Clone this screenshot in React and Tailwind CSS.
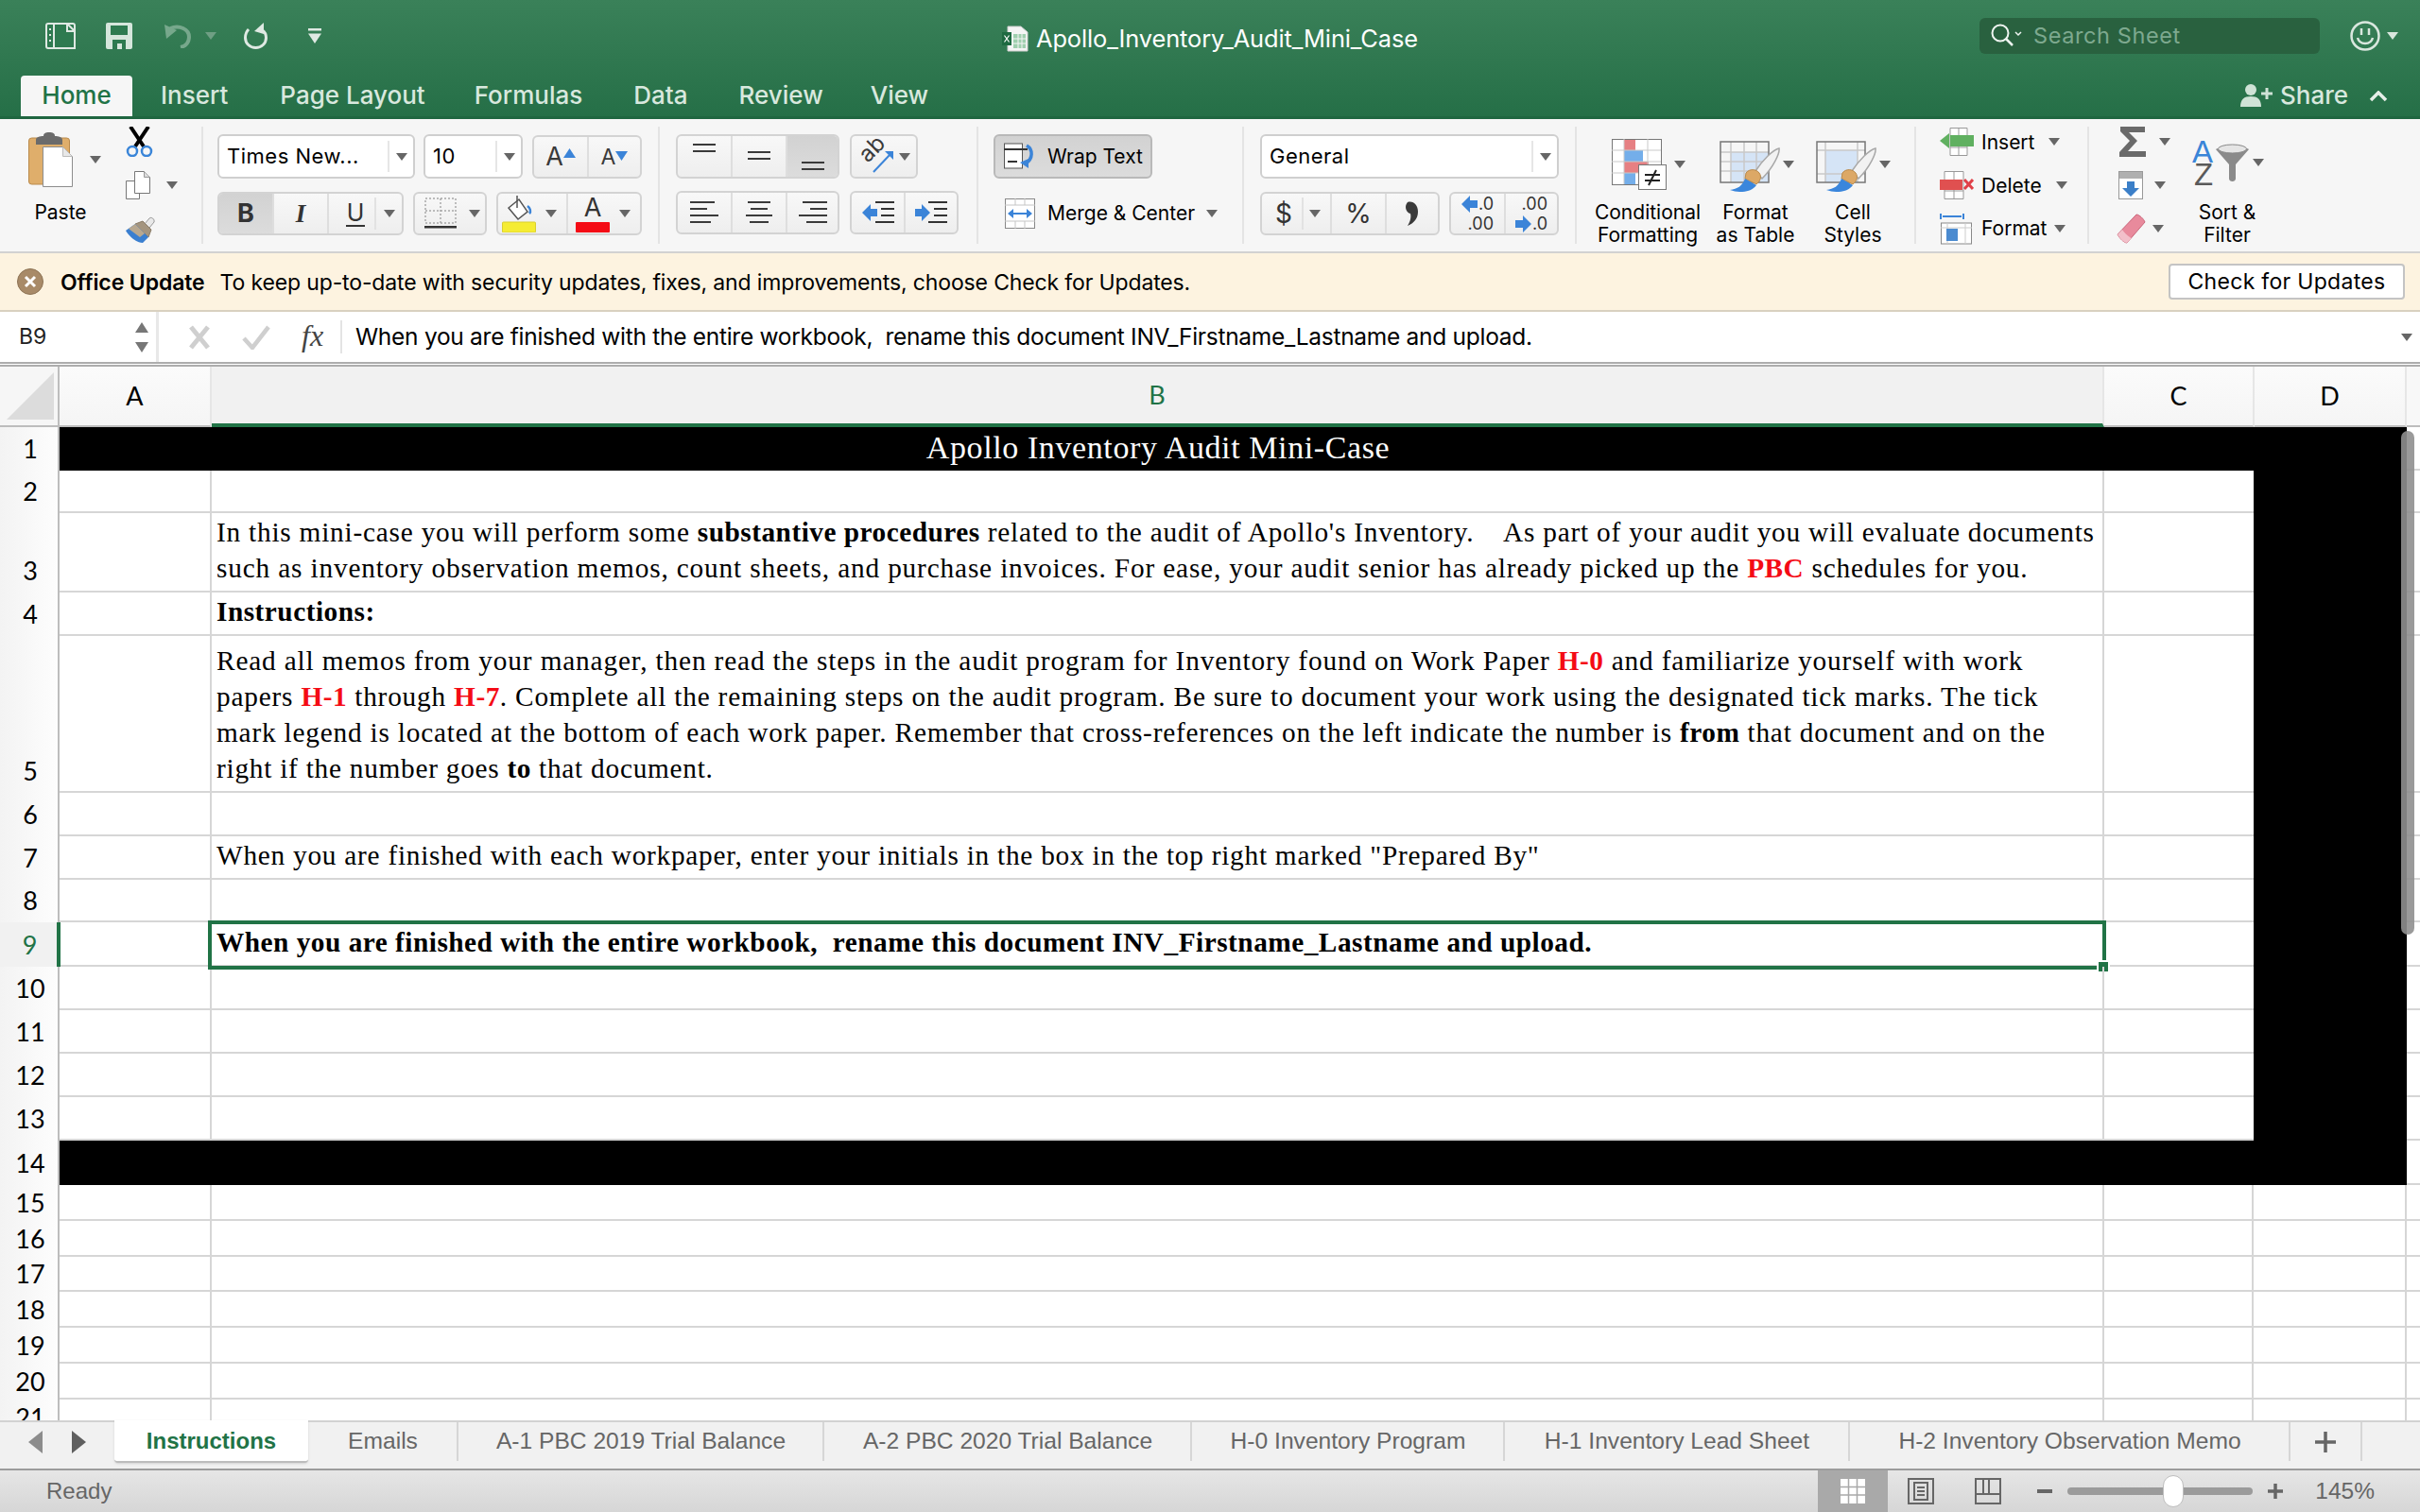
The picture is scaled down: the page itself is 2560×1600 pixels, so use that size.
import React from 'react';

const Caret = ({ c = '#666', className = '' }) => (
  <svg width="12" height="8" viewBox="0 0 12 8" className={`shrink-0 ${className}`}><path d="M0 0h12L6 8z" fill={c} /></svg>
);

const Sep = () => <div className="w-[2px] h-[124px] mt-[8px] bg-[#e4e4e4] shrink-0" />;

const Group = ({ className = '', children }) => (
  <div className={`flex h-[46px] rounded-[6px] border-2 border-[#d3d3d3] bg-gradient-to-b from-[#f8f8f8] to-[#eeeeee] overflow-hidden shrink-0 ${className}`}>{children}</div>
);

const Cell = ({ className = '', on, children }) => (
  <div className={`flex items-center justify-center border-r-2 border-[#dedede] last:border-r-0 ${on ? 'bg-gradient-to-b from-[#d2d2d2] to-[#dcdcdc]' : ''} ${className}`}>{children}</div>
);

const Lines = ({ ys }) => (
  <svg width="30" height="40" viewBox="0 0 30 40">
    {ys.map(([x1, x2, y], i) => <rect key={i} x={x1} y={y} width={x2 - x1} height="2" fill="#3a3a3a" />)}
  </svg>
);

const Combo = ({ w, label }) => (
  <div className={`${w} h-[47px] rounded-[6px] border-2 border-[#cfcfcf] bg-white flex items-center pl-[8px] text-[22px] tracking-[0.5px] text-black shrink-0`}>
    <span className="flex-1 truncate">{label}</span>
    <div className="w-[2px] h-[33px] bg-[#e6e6e6]" />
    <div className="w-[25px] flex justify-center"><Caret /></div>
  </div>
);

const RibbonLabel = ({ children }) => (
  <div className="text-[21px] leading-[24px] text-black text-center whitespace-pre">{children}</div>
);

const BrushTip = () => (
  <>
    <path d="M38 32C46 20 56 10 63 8c1 5-6 20-18 32z" fill="#f2f2f2" stroke="#a8a8a8" strokeWidth="1.5" />
    <path d="M28 34c4-5 11-4 14 0 3 4 1 9-3 12l-12-6z" fill="#dca866" stroke="#b98a4c" />
    <path d="M11 52c8-1 13-4 16-12l12 7c-5 7-16 9-28 5z" fill="#3a86dc" />
  </>
);

const GridLines = ({ rows, cols }) => (
  <>
    {rows.map(y => <line key={`r${y}`} x1="1" x2="52" y1={y} y2={y} stroke="#c9c9c9" strokeWidth="1.5" />)}
    {cols.map(x => <line key={`c${x}`} x1={x} x2={x} y1="1" y2="44" stroke="#c9c9c9" strokeWidth="1.5" />)}
    <rect x="1" y="1" width="51" height="43" fill="none" stroke="#777" strokeWidth="1.5" />
  </>
);

const TitleBar = () => (
  <div className="h-[126px] bg-gradient-to-b from-[#3a8159] to-[#256f47] border-b-[3px] border-[#1f6640] shrink-0 flex flex-col">
    <div className="h-[80px] flex items-start">
      <div className="w-[1060px] flex items-center pl-[48px] pt-[24px] shrink-0">
        <svg width="32" height="28" viewBox="0 0 32 28" fill="none"><rect x="1" y="1" width="30" height="26" rx="2" fill="#2e7a50" stroke="#dfe9e3" strokeWidth="2" /><path d="M9 1h14l8 8v18H9z" fill="#2e7a50" stroke="#dfe9e3" strokeWidth="2" /><path d="M23 1v8h8" stroke="#dfe9e3" strokeWidth="2" /><path d="M5 6v2M5 12v2M5 18v2" stroke="#dfe9e3" strokeWidth="2" /></svg>
        <svg width="28" height="28" viewBox="0 0 28 28" className="ml-[32px]"><path d="M2 0h24a2 2 0 0 1 2 2v24a2 2 0 0 1-2 2H2a2 2 0 0 1-2-2V2a2 2 0 0 1 2-2z" fill="#d6e6dc" /><rect x="5" y="3" width="18" height="10" fill="#2e7a50" /><path d="M7 28v-10h14v10h-4v-6h-5v6z" fill="#2e7a50" /></svg>
        <svg width="31" height="26" viewBox="0 0 31 26" fill="none" className="ml-[32px]"><path d="M8 5C18 1 28 6 28 14c0 6-4 10-9 11" stroke="#77a88c" strokeWidth="4" /><path d="M2 1l2 15 11-9z" fill="#77a88c" /></svg>
        <Caret c="#6f9f84" className="ml-[14px]" />
        <svg width="26" height="28" viewBox="0 0 26 28" fill="none" className="ml-[29px]"><path d="M5 7C2 10 1.500 13 1.500 16c0 6 5 10.500 11 10.500s11-4.500 11-10.500c0-3-1-6-4-8" stroke="#dfe9e3" strokeWidth="3" /><path d="M21 0v12L11 9z" fill="#dfe9e3" /></svg>
        <svg width="16" height="16" viewBox="0 0 16 16" className="ml-[41px]"><rect x="1" y="0" width="14" height="2.5" fill="#dfe9e3" /><path d="M1 5.500h14L8 16z" fill="#dfe9e3" /></svg>
      </div>
      <div className="w-[1034px] flex items-center pt-[22px] shrink-0">
        <svg width="28" height="28" viewBox="0 0 28 28">
          <path d="M6 1h14l7 6v20H6z" fill="#f5f5f5" stroke="#cfcfcf" /><path d="M12 9h13v15H12z" fill="#9fcfae" /><path d="M12 14h13M12 19h13M17 9v15M21 9v15" stroke="#f5f5f5" /><rect x="0" y="7" width="10" height="14" fill="#1e6a41" /><path d="M2.500 10.500l5 7M7.500 10.500l-5 7" stroke="#fff" strokeWidth="1.200" />
        </svg>
        <span className="ml-[8px] text-[25.400px] text-white tracking-[-0.1px] whitespace-pre">Apollo_Inventory_Audit_Mini_Case</span>
      </div>
      <div className="w-[360px] h-[38px] mt-[19px] rounded-[6px] bg-[#29613f] flex items-center pl-[11px] shrink-0">
        <svg width="34" height="28" viewBox="0 0 34 28" fill="none"><circle cx="11" cy="11" r="8.500" stroke="#eef4f0" strokeWidth="2" /><path d="M17 17l7 7" stroke="#eef4f0" strokeWidth="2.500" /><path d="M27 10l3 3 3-3" stroke="#eef4f0" strokeWidth="1.500" /></svg>
        <span className="ml-[12px] text-[23.500px] tracking-[0.6px] text-[#7ea98f]">Search Sheet</span>
      </div>
      <div className="flex items-center ml-[32px] mt-[22px]">
        <svg width="32" height="32" viewBox="0 0 32 32" fill="none"><circle cx="16" cy="16" r="14.500" stroke="#d9e7de" strokeWidth="2.500" /><path d="M12 8v7M20 8v7" stroke="#d9e7de" strokeWidth="2.500" /><path d="M8 18c2 8 14 8 16 0" stroke="#d9e7de" strokeWidth="2.500" /></svg>
        <Caret c="#d9e7de" className="ml-[7px]" />
      </div>
    </div>
    <div className="flex-1 flex items-end pl-[22px] text-[26px] font-medium text-[#d8e8de] whitespace-pre">
      <div className="w-[118px] h-[43px] bg-[#f6f6f6] rounded-t-[4px] text-[#217346] flex items-center justify-center pb-[2px]">Home</div>
      {[['Insert', 'ml-[30px]'], ['Page Layout', 'ml-[55px]'], ['Formulas', 'ml-[52px]'], ['Data', 'ml-[54px]'], ['Review', 'ml-[54px]'], ['View', 'ml-[50px]']].map(([t, m]) => (
        <div key={t} className={`${m} h-[43px] flex items-center pb-[2px]`}>{t}</div>
      ))}
      <div className="flex-1" />
      <svg width="34" height="24" viewBox="0 0 34 24" className="mb-[10px]"><circle cx="11" cy="6" r="6" fill="#cfe2d6" /><path d="M0 24c0-8 4-11 11-11s11 3 11 11z" fill="#cfe2d6" /><path d="M22 10h12M28 4v12" stroke="#cfe2d6" strokeWidth="3" /></svg>
      <div className="ml-[8px] h-[43px] flex items-center pb-[2px]">Share</div>
      <svg width="20" height="12" viewBox="0 0 20 12" fill="none" className="ml-[22px] mr-[34px] mb-[15px]"><path d="M2 10l8-8 8 8" stroke="#e6efe9" strokeWidth="3.500" /></svg>
    </div>
  </div>
);

const Ribbon = () => (
  <div className="h-[142px] bg-[#f6f6f6] border-b-2 border-[#d2d2d2] flex items-start shrink-0">
    {/* clipboard */}
    <div className="w-[213px] flex shrink-0">
      <div className="ml-[30px] w-[85px] pt-[14px]">
        <div className="flex items-center">
          <svg width="47" height="58" viewBox="0 0 47 58"><rect x="0.500" y="6" width="43" height="49" rx="3" fill="#dfae6b" stroke="#b98a4c" /><path d="M8 8c0-3 4-4 8-4 0-3 2-4 6-4s6 1 6 4c4 0 8 1 8 4v5H8z" fill="#6b6b6b" /><path d="M15.500 15.500h21l10 10v32h-31z" fill="#fff" stroke="#8d8d8d" /><path d="M36.500 15.500v10h10" fill="#e8e8e8" stroke="#bbb" /></svg>
          <Caret className="ml-[18px]" />
        </div>
        <div className="w-[68px] mt-[15px]"><RibbonLabel>Paste</RibbonLabel></div>
      </div>
      <div className="ml-[18px] pt-[8px] flex flex-col">
        <svg width="29" height="32" viewBox="0 0 29 32" fill="none"><path d="M5 0l14 21M24 0L10 21" stroke="#000" strokeWidth="4" /><circle cx="7" cy="26" r="5" stroke="#3a85d8" strokeWidth="2.500" /><circle cx="22" cy="26" r="5" stroke="#3a85d8" strokeWidth="2.500" /></svg>
        <div className="flex items-center mt-[15px]">
          <svg width="26" height="30" viewBox="0 0 26 30"><path d="M0.500 10.500h14v19h-14z" fill="#fff" stroke="#777" /><path d="M9.500 0.500h10l6 6v17h-16z" fill="#fff" stroke="#777" /><path d="M19.500 0.500v6h6" fill="#ddd" stroke="#999" /></svg>
          <Caret className="ml-[17px]" />
        </div>
        <svg width="32" height="28" viewBox="0 0 32 28" className="mt-[18px]"><path d="M20 8l5-6c2-2 6 1 5 4l-5 6z" fill="#e9e9e9" stroke="#999" /><path d="M10 8l8-3 9 9-3 8z" fill="#a4957f" stroke="#8a7c68" /><path d="M0 15l10-7 14 14-6 6c-6 0-14-6-18-13z" fill="#3a7fd0" /><path d="M3 13l7-5 10 10-5 4z" fill="#b8a890" /></svg>
      </div>
    </div>
    <Sep />
    {/* font */}
    <div className="w-[481px] pl-[15px] pt-[16px] shrink-0">
      <div className="flex">
        <Combo w="w-[209px]" label="Times New..." />
        <Combo w="w-[105px] ml-[9px]" label="10" />
        <Group className="w-[116px] ml-[10px] mt-px">
          <Cell className="w-[58px]"><span className="text-[27px] text-[#3a3a3a]">A</span><svg width="13" height="10" viewBox="0 0 13 10" className="mb-[8px]"><path d="M0 10L6.500 0 13 10z" fill="#3b84d8" /></svg></Cell>
          <Cell className="flex-1"><span className="text-[23px] text-[#3a3a3a]">A</span><svg width="13" height="10" viewBox="0 0 13 10" className="mb-[2px]"><path d="M0 0h13L6.500 10z" fill="#3b84d8" /></svg></Cell>
        </Group>
      </div>
      <div className="flex mt-[14px]">
        <Group className="w-[197px]">
          <Cell on className="w-[58px]"><span className="text-[27px] font-bold text-[#333]">B</span></Cell>
          <Cell className="w-[58px]"><span className="text-[27px] italic font-bold text-[#333] font-['Liberation_Serif',serif]">I</span></Cell>
          <Cell className="flex-1 justify-start pl-[18px]">
            <div className="flex flex-col items-center"><span className="text-[25px] leading-[25px] text-[#333]">U</span><div className="w-[20px] h-[2px] bg-[#333]" /></div>
            <div className="w-[2px] h-[34px] bg-[#e2e2e2] ml-[10px]" />
            <Caret className="ml-[8px]" />
          </Cell>
        </Group>
        <Group className="w-[78px] ml-[10px]">
          <div className="flex items-center pl-[10px]">
            <svg width="34" height="34" viewBox="0 0 34 34" fill="none"><path d="M1 1h32v26H1zM17 1v26M1 14h32" stroke="#a8a8a8" strokeWidth="1.500" strokeDasharray="2 2" /><rect x="0" y="30" width="34" height="2.500" fill="#333" /></svg>
            <Caret className="ml-[13px]" />
          </div>
        </Group>
        <Group className="w-[154px] ml-[10px]">
          <Cell className="w-[74px] pr-[6px]">
            <svg width="36" height="40" viewBox="0 0 36 40" fill="none"><path d="M7 14l11-9 9 13-10 8z" fill="#fff" stroke="#555" strokeWidth="1.500" /><path d="M16 1v13" stroke="#555" strokeWidth="1.500" /><path d="M27 12c3 2 4 6 2 8" stroke="#3b84d8" strokeWidth="2.500" /><rect x="0.500" y="29" width="35" height="11" rx="1" fill="#f5ec33" stroke="#d9cf30" /></svg>
            <Caret className="ml-[10px]" />
          </Cell>
          <Cell className="flex-1 pr-[2px]">
            <div className="flex flex-col items-center"><span className="text-[27px] leading-[27px] text-[#333]">A</span><div className="w-[36px] h-[11px] bg-[#f40b15] rounded-[1px] mt-[2px]" /></div>
            <Caret className="ml-[10px]" />
          </Cell>
        </Group>
      </div>
    </div>
    <Sep />
    {/* alignment */}
    <div className="w-[335px] pl-[17px] pt-[16px] shrink-0">
      <div className="flex">
        <Group className="w-[173px] h-[47px]">
          <Cell className="w-[58px]"><Lines ys={[[3, 27, 6], [3, 27, 13]]} /></Cell>
          <Cell className="w-[58px]"><Lines ys={[[3, 27, 14], [3, 27, 21]]} /></Cell>
          <Cell on className="flex-1"><Lines ys={[[3, 27, 25], [3, 27, 32]]} /></Cell>
        </Group>
        <Group className="w-[72px] h-[47px] ml-[11px]">
          <div className="flex items-center pl-[10px]">
            <svg width="36" height="34" viewBox="0 0 36 34" className="overflow-visible"><text transform="translate(7 24) rotate(-45)" fontSize="24" fill="#3a3a3a" fontFamily="Inter">ab</text><path d="M13 33L31 14" stroke="#3b84d8" strokeWidth="2" /><path d="M25 11h9v9z" fill="#3b84d8" /></svg>
            <Caret className="ml-[4px]" />
          </div>
        </Group>
      </div>
      <div className="flex mt-[13px]">
        <Group className="w-[173px]">
          <Cell className="w-[58px]"><Lines ys={[[0, 26, 8], [0, 18, 15], [0, 30, 22], [0, 22, 29]]} /></Cell>
          <Cell className="w-[58px]"><Lines ys={[[3, 27, 8], [6, 24, 15], [1, 29, 22], [5, 25, 29]]} /></Cell>
          <Cell className="flex-1"><Lines ys={[[4, 30, 8], [12, 30, 15], [0, 30, 22], [8, 30, 29]]} /></Cell>
        </Group>
        <Group className="w-[115px] ml-[11px]">
          <Cell className="w-[57px]"><svg width="34" height="24" viewBox="0 0 34 24"><path d="M0 12l9-9v5h7v8H9v5z" fill="#3b84d8" /><path d="M14 1h20M20 8h14M20 15h14M14 22h20" stroke="#333" strokeWidth="2" /></svg></Cell>
          <Cell className="flex-1"><svg width="34" height="24" viewBox="0 0 34 24"><path d="M16 12l-9-9v5H0v8h7v5z" fill="#3b84d8" /><path d="M14 1h20M20 8h14M20 15h14M14 22h20" stroke="#333" strokeWidth="2" /></svg></Cell>
        </Group>
      </div>
    </div>
    <Sep />
    {/* wrap and merge */}
    <div className="w-[279px] pl-[16px] pt-[16px] shrink-0">
      <div className="w-[168px] h-[47px] rounded-[6px] border-2 border-[#b9b9b9] bg-gradient-to-b from-[#d2d2d2] to-[#dcdcdc] flex items-center pl-[9px] text-[21px] text-black">
        <svg width="36" height="30" viewBox="0 0 36 30" fill="none"><rect x="0.500" y="1" width="19" height="26" fill="#fff" stroke="#555" /><path d="M0 7h25M4 20h10" stroke="#333" strokeWidth="2" /><path d="M24 3c7 4 7 14-1 19" stroke="#3b84d8" strokeWidth="3.500" /><path d="M17 21l9-4v10z" fill="#3b84d8" /></svg>
        <span className="ml-[10px] pt-px">Wrap Text</span>
      </div>
      <div className="flex items-center mt-[21px] ml-[12px] text-[21px] text-black">
        <svg width="32" height="32" viewBox="0 0 32 32" fill="none"><rect x="0.500" y="0.500" width="31" height="31" fill="#fff" stroke="#888" /><path d="M0 7h32M0 24h32M11 0v7M21 0v7M11 24v8M21 24v8" stroke="#c5c5c5" /><path d="M6 16h20" stroke="#3b84d8" strokeWidth="2" /><path d="M3 16l6-5v10zM29 16l-6-5v10z" fill="#3b84d8" /></svg>
        <span className="ml-[13px] whitespace-pre">Merge &amp; Center</span>
        <Caret className="ml-[12px]" />
      </div>
    </div>
    <Sep />
    {/* number */}
    <div className="w-[350px] pl-[17px] pt-[16px] shrink-0">
      <Combo w="w-[316px]" label="General" />
      <div className="flex mt-[14px]">
        <Group className="w-[190px]">
          <Cell className="w-[74px] justify-start pl-[14px]">
            <span className="text-[28px] text-[#333]">$</span>
            <div className="w-[2px] h-[34px] bg-[#e2e2e2] ml-[10px]" />
            <Caret className="ml-[6px]" />
          </Cell>
          <Cell className="w-[58px]"><span className="text-[28px] text-[#333]">%</span></Cell>
          <Cell className="flex-1"><svg width="14" height="26" viewBox="0 0 14 26"><path d="M2 1c6-2 11 3 11 10 0 7-4 12-11 15 3-5 4-9 3-13C3 13 0 10 0 6c0-2 1-4 2-5z" fill="#3a3a3a" /></svg></Cell>
        </Group>
        <Group className="w-[116px] ml-[10px]">
          <Cell className="w-[58px] text-[18px] leading-[21px] text-[#333]">
            <div className="flex flex-col items-end"><div className="flex items-center"><svg width="17" height="18" viewBox="0 0 17 18" className="mr-[1px]"><path d="M0 9l9-9v5h8v8H9v5z" fill="#3b84d8" /></svg>.0</div><div>.00</div></div>
          </Cell>
          <Cell className="flex-1 text-[18px] leading-[21px] text-[#333]">
            <div className="flex flex-col items-end"><div>.00</div><div className="flex items-center"><svg width="17" height="18" viewBox="0 0 17 18" className="mr-[1px]"><path d="M17 9L8 0v5H0v8h8v5z" fill="#3b84d8" /></svg>.0</div></div>
          </Cell>
        </Group>
      </div>
    </div>
    <Sep />
    {/* styles */}
    <div className="w-[357px] pl-[12px] pt-[18px] flex shrink-0">
      <div className="w-[126px] flex flex-col items-center">
        <div className="h-[56px] w-full flex items-start pl-[25px] pt-[3px]">
          <svg width="58" height="54" viewBox="0 0 58 54">
            <rect x="0.500" y="0.500" width="52" height="48" fill="#fff" stroke="#777" />
            <rect x="13" y="1" width="12" height="11" fill="#e68083" /><rect x="13" y="12" width="20" height="12" fill="#74aeea" /><rect x="13" y="24" width="26" height="12" fill="#e68083" /><rect x="13" y="36" width="12" height="12" fill="#74aeea" />
            <path d="M0 12h52M0 24h52M0 36h52M13 0v48M38 0v48" stroke="#c9c9c9" />
            <rect x="28.500" y="27.500" width="29" height="26" fill="#fff" stroke="#777" />
            <path d="M35 38h16M35 44h16M47 33l-8 16" stroke="#222" strokeWidth="2" />
          </svg>
          <Caret className="mt-[23px] ml-[8px]" />
        </div>
        <div className="mt-[13px]"><RibbonLabel>{'Conditional\nFormatting'}</RibbonLabel></div>
      </div>
      <div className="w-[102px] flex flex-col items-center">
        <div className="h-[56px] w-full flex items-start pl-[13px] pt-[5px]">
          <svg width="64" height="54" viewBox="0 0 64 54" fill="none">
            <rect x="12" y="12" width="40" height="32" fill="#d5e4f6" />
            <GridLines rows={[12, 22, 32]} cols={[12, 26, 39]} />
            <BrushTip />
          </svg>
          <Caret className="mt-[21px] ml-[3px]" />
        </div>
        <div className="mt-[13px]"><RibbonLabel>{'Format\nas Table'}</RibbonLabel></div>
      </div>
      <div className="w-[104px] flex flex-col items-center">
        <div className="h-[56px] w-full flex items-start pl-[13px] pt-[5px]">
          <svg width="64" height="54" viewBox="0 0 64 54" fill="none">
            <rect x="10" y="10" width="34" height="34" fill="#d5e4f6" />
            <GridLines rows={[10, 35]} cols={[10, 44]} />
            <BrushTip />
          </svg>
          <Caret className="mt-[21px] ml-[3px]" />
        </div>
        <div className="mt-[13px]"><RibbonLabel>{'Cell\nStyles'}</RibbonLabel></div>
      </div>
    </div>
    <Sep />
    {/* cells */}
    <div className="w-[181px] pl-[25px] pt-px shrink-0 text-[21px] text-black">
      <div className="h-[46px] flex items-center">
        <svg width="36" height="30" viewBox="0 0 36 30"><path d="M11 0.500h18v29H11zM20 0v30M11 21h18" fill="#fff" stroke="#999" /><rect x="11" y="8" width="25" height="12" fill="#60b060" /><path d="M0 14l10-8v16z" fill="#60b060" /></svg>
        <span className="ml-[8px] pt-[2px]">Insert</span><Caret className="ml-[15px]" />
      </div>
      <div className="h-[46px] flex items-center">
        <svg width="36" height="30" viewBox="0 0 36 30"><path d="M5 0.500h20v29H5zM15 0v30M5 21h20" fill="#fff" stroke="#999" /><rect x="0" y="9" width="24" height="11" fill="#e05050" /><path d="M26 9l9 10M35 9l-9 10" stroke="#e04048" strokeWidth="3" /></svg>
        <span className="ml-[8px] pt-[2px]">Delete</span><Caret className="ml-[15px]" />
      </div>
      <div className="h-[46px] flex items-center">
        <svg width="36" height="34" viewBox="0 0 36 34"><path d="M1 1v6M25 1v6M3 4h20" stroke="#3b84d8" strokeWidth="2" /><rect x="1.500" y="11" width="32" height="22" fill="#fff" stroke="#888" /><path d="M1 16h33M8 11v22M27 11v22" stroke="#ccc" /><rect x="7" y="17" width="12" height="13" fill="#4b8bd0" /></svg>
        <span className="ml-[8px]">Format</span><Caret className="ml-[8px]" />
      </div>
    </div>
    <Sep />
    {/* editing */}
    <div className="flex-1 pl-[28px] flex">
      <div className="w-[78px] pt-px">
        <div className="h-[46px] flex items-center">
          <svg width="30" height="32" viewBox="0 0 30 32" className="ml-[4px]"><path d="M1 0h26v6H10l9 9-10 11h19v6H0v-5l11-12L1 5z" fill="#6a6a6a" /></svg>
          <Caret className="ml-[12px]" />
        </div>
        <div className="h-[46px] flex items-center">
          <svg width="27" height="30" viewBox="0 0 27 30" className="ml-[3px]"><rect x="0.500" y="0.500" width="25" height="29" fill="#fff" stroke="#999" /><rect x="1" y="1" width="24" height="7" fill="#b0b0b0" /><path d="M9 11h8v7h5l-9 9-9-9h5z" fill="#3b7fc8" /></svg>
          <Caret className="ml-[11px]" />
        </div>
        <div className="h-[46px] flex items-center">
          <svg width="32" height="32" viewBox="0 0 32 32"><path d="M2 22L22 1c3 0 8 5 9 8L12 31c-3 0-8-5-10-9z" fill="#e88a9c" stroke="#c9657a" /><path d="M2 22c2 4 7 9 10 9l5-5c-3-1-8-6-10-9z" fill="#f2c0ca" /></svg>
          <Caret className="ml-[7px]" />
        </div>
      </div>
      <div className="w-[80px] pt-[18px] flex flex-col items-center">
        <div className="h-[56px] w-full flex items-start pl-[3px] pt-[3px]">
          <svg width="61" height="52" viewBox="0 0 61 52" className="overflow-visible">
            <text x="0" y="25" fontSize="33" fill="#3a85d8" fontFamily="Liberation Sans">A</text>
            <text x="2" y="49" fontSize="33" fill="#5a5a5a" fontFamily="Liberation Sans">Z</text>
            <path d="M25 11c3-3 32-3 35 0L46 27v15c0 4-7 4-7 0V27z" fill="#8a8a8a" /><ellipse cx="42.500" cy="10.500" rx="15" ry="4.500" fill="#e5e5e5" stroke="#888" />
          </svg>
          <Caret className="mt-[21px] ml-[3px]" />
        </div>
        <div className="mt-[13px]"><RibbonLabel>{'Sort &\nFilter'}</RibbonLabel></div>
      </div>
    </div>
  </div>
);

const UpdateBar = () => (
  <div className="h-[62px] bg-[#fdf3e0] border-b-2 border-[#d9d1c0] flex items-center shrink-0 text-[23px] text-black whitespace-pre">
    <svg width="28" height="28" viewBox="0 0 28 28" className="ml-[18px]"><circle cx="14" cy="14" r="13.500" fill="#a88a68" stroke="#8d7355" /><path d="M9 9l10 10M19 9L9 19" stroke="#fff" strokeWidth="3" /></svg>
    <span className="ml-[18px] font-semibold tracking-[-0.1px] pt-[2px]">Office Update</span>
    <span className="ml-[16px] tracking-[-0.14px] pt-[2px]">To keep up-to-date with security updates, fixes, and improvements, choose Check for Updates.</span>
    <div className="flex-1" />
    <div className="w-[250px] h-[38px] mr-[16px] rounded-[4px] border-2 border-[#c4c4c4] bg-white flex items-center justify-center text-[23px] tracking-[0.3px]">Check for Updates</div>
  </div>
);

const FormulaBar = () => (
  <div className="h-[58px] bg-white border-b-[5px] border-double border-[#adadad] flex items-center shrink-0">
    <div className="w-[168px] h-full border-r-[3px] border-[#e8e8e8] flex items-center pl-[20px] pr-[8px] text-[23px] text-[#222] mr-[31px]">
      <span className="flex-1">B9</span>
      <svg width="14" height="32" viewBox="0 0 14 32"><path d="M0 11L7 0l7 11zM0 21h14L7 32z" fill="#777" /></svg>
    </div>
    <svg width="24" height="26" viewBox="0 0 24 26" fill="none"><path d="M3 2l18 22M21 2L3 24" stroke="#cfcfcf" strokeWidth="5" /></svg>
    <svg width="30" height="26" viewBox="0 0 30 26" fill="none" className="ml-[33px]"><path d="M2 14l9 10L28 2" stroke="#cfcfcf" strokeWidth="4.500" /></svg>
    <span className="ml-[33px] w-[43px] text-[32px] leading-none italic text-[#444] font-['Liberation_Serif',serif] border-r-2 border-[#e4e4e4] pb-[3px]">fx</span>
    <span className="ml-[14px] text-[24.500px] tracking-[-0.28px] text-black whitespace-pre">When you are finished with the entire workbook,  rename this document INV_Firstname_Lastname and upload.</span>
    <div className="flex-1" />
    <Caret c="#666" className="mr-[8px]" />
  </div>
);

const ColHead = ({ w, label, on }) => (
  <div className={`${w} border-r-2 border-[#e6e6e6] flex items-center justify-center ${on ? 'bg-[#f1f1f1] border-b-4 border-b-[#217346] text-[#217346]' : 'border-b-2 border-b-[#bdbdbd] bg-gradient-to-b from-[#fbfbfb] to-[#f5f5f5] text-black'}`}>{label}</div>
);

const ColHeader = () => (
  <div className="h-[64px] flex font-['Lato',sans-serif] text-[27px] shrink-0">
    <div className="w-[63px] border-r-2 border-b-2 border-[#bdbdbd] bg-[#f6f6f6] flex items-center justify-center pl-[2px]">
      <svg width="50" height="50" viewBox="0 0 50 50"><path d="M50 0v50H0z" fill="#dcdcdc" /></svg>
    </div>
    <ColHead w="w-[161px]" label="A" />
    <ColHead w="w-[2002px]" label="B" on />
    <ColHead w="w-[159px]" label="C" />
    <ColHead w="w-[161px]" label="D" />
    <div className="flex-1 bg-[#f8f8f8] border-b-2 border-[#bdbdbd]" />
  </div>
);

const Row = ({ n, h, children, d = false, on, full }) => {
  const line = full ? '' : 'border-b-2 border-[#d6d6d6]';
  return (
    <div className={`${h} flex shrink-0`}>
      <div className={`flex items-end justify-center leading-[38px] font-['Lato',sans-serif] text-[27px] shrink-0 ${d || full ? 'pb-[4px]' : ''} ${on ? 'w-[64px] pl-[3px] bg-[#f1f1f1] text-[#217346] border-r-4 border-[#217346]' : 'w-[63px] pl-[3px] bg-gradient-to-r from-[#f3f3f3] to-[#fdfdfd] text-black border-r-2 border-[#bdbdbd]'}`}>{n}</div>
      {full ? (
        <div className="w-[2483px] bg-black flex">
          <div className="w-[161px] shrink-0" />
          <div className="w-[2002px] shrink-0 flex items-center justify-center pb-[3px] text-white text-[34px] tracking-[0.6px] font-['Liberation_Serif',serif]">{children}</div>
        </div>
      ) : (
        <>
          <div className={`${on ? 'w-[160px]' : 'w-[161px]'} border-r-2 border-[#d6d6d6] ${line} shrink-0`} />
          <div className={`w-[2002px] border-r-2 border-[#d6d6d6] ${line} shrink-0 relative flex flex-col justify-end pl-[5px] pb-[5px] text-[29.300px] leading-[38px] tracking-[0.75px] text-black font-['Liberation_Serif',serif] whitespace-pre [&_b]:tracking-[0.5px]`}>{children}</div>
          <div className={`w-[158px] ${d ? '' : 'border-r-2 border-[#d6d6d6]'} ${line} shrink-0`} />
          <div className={`w-[162px] shrink-0 ${d ? 'bg-black' : `border-r-2 border-[#d6d6d6] ${line}`}`} />
        </>
      )}
      <div className="flex-1 border-b-2 border-[#d6d6d6]" />
    </div>
  );
};

const Red = ({ children }) => <b className="text-[#f40b15]">{children}</b>;

const Sheet = () => (
  <div className="flex-1 overflow-hidden relative">
    <Row n="1" h="h-[46px]" full>Apollo Inventory Audit Mini-Case</Row>
    <Row n="2" h="h-[45px]" d />
    <Row n="3" h="h-[84px]" d>
      <div className="tracking-[0.78px]">In this mini-case you will perform some <b>substantive procedures</b> related to the audit of Apollo's Inventory.    As part of your audit you will evaluate documents</div>
      <div className="tracking-[0.84px]">such as inventory observation memos, count sheets, and purchase invoices. For ease, your audit senior has already picked up the <Red>PBC</Red> schedules for you.</div>
    </Row>
    <Row n="4" h="h-[46px]" d><b>Instructions:</b></Row>
    <Row n="5" h="h-[166px]" d>
      <div className="tracking-[0.85px]">Read all memos from your manager, then read the steps in the audit program for Inventory found on Work Paper <Red>H-0</Red> and familiarize yourself with work</div>
      <div className="tracking-[0.8px]">papers <Red>H-1</Red> through <Red>H-7</Red>. Complete all the remaining steps on the audit program. Be sure to document your work using the designated tick marks. The tick</div>
      <div className="tracking-[0.8px]">mark legend is located at the bottom of each work paper. Remember that cross-references on the left indicate the number is <b>from</b> that document and on the</div>
      <div>right if the number goes <b>to</b> that document.</div>
    </Row>
    <Row n="6" h="h-[46px]" d />
    <Row n="7" h="h-[46px]" d>When you are finished with each workpaper, enter your initials in the box in the top right marked "Prepared By"</Row>
    <Row n="8" h="h-[45px]" d />
    <Row n="9" h="h-[47px]" d on>
      <b>When you are finished with the entire workbook,  rename this document INV_Firstname_Lastname and upload.</b>
      <div className="absolute -left-[4px] -top-[2px] -right-[4px] -bottom-[5px] border-4 border-[#217346]" />
      <div className="absolute -right-[6px] -bottom-[7px] w-[10px] h-[10px] bg-[#217346] outline-2 outline-white" />
    </Row>
    <Row n="10" h="h-[46px]" d />
    <Row n="11" h="h-[46px]" d />
    <Row n="12" h="h-[46px]" d />
    <Row n="13" h="h-[46px]" d />
    <Row n="14" h="h-[47px]" full />
    <Row n="15" h="h-[38px]" />
    <Row n="16" h="h-[38px]" />
    <Row n="17" h="h-[37px]" />
    <Row n="18" h="h-[38px]" />
    <Row n="19" h="h-[38px]" />
    <Row n="20" h="h-[38px]" />
    <Row n="21" h="h-[38px]" />
    <div className="absolute left-[2540px] top-[4px] w-[14px] h-[533px] rounded-full bg-[#8f8f8f]/90" />
  </div>
);

const tabs = [
  ['Emails', 'w-[159px]'],
  ['A-1 PBC 2019 Trial Balance', 'w-[387px]'],
  ['A-2 PBC 2020 Trial Balance', 'w-[389px]'],
  ['H-0 Inventory Program', 'w-[331px]'],
  ['H-1 Inventory Lead Sheet', 'w-[365px]'],
  ['H-2 Inventory Observation Memo', 'w-[466px]'],
];

const TabBar = () => (
  <div className="h-[51px] bg-[#f1f1f1] border-t-2 border-[#d2d2d2] flex items-start shrink-0 text-[24.600px] text-[#666] whitespace-pre font-['Liberation_Sans',Arial,sans-serif]">
    <div className="w-[121px] h-[42px] flex items-center pl-[30px] shrink-0">
      <svg width="15" height="24" viewBox="0 0 15 24"><path d="M15 0v24L0 12z" fill="#8c8c8c" /></svg>
      <svg width="15" height="24" viewBox="0 0 15 24" className="ml-[31px]"><path d="M0 0v24l15-12z" fill="#5f5f5f" /></svg>
    </div>
    <div className="w-[205px] h-[45px] -mt-[2px] bg-white rounded-b-[4px] border-b-2 border-[#bdbdbd] shadow-sm flex items-center justify-center text-[24px] text-[#217346] font-bold shrink-0">Instructions</div>
    {tabs.map(([t, w]) => (
      <div key={t} className={`${w} h-[41px] border-r-2 border-[#d6d6d6] flex items-center justify-center shrink-0 pl-px`}>{t}</div>
    ))}
    <div className="w-[76px] h-[41px] border-r-2 border-[#d6d6d6] flex items-center justify-center shrink-0">
      <svg width="22" height="22" viewBox="0 0 22 22"><path d="M11 0v22M0 11h22" stroke="#666" strokeWidth="3.500" /></svg>
    </div>
  </div>
);

const StatusBar = () => (
  <div className="h-[46px] bg-gradient-to-b from-[#e6e6e6] to-[#d6d6d6] border-t-2 border-[#9c9c9c] flex items-center shrink-0 text-[24px] text-[#666] font-['Liberation_Sans',Arial,sans-serif]">
    <span className="ml-[49px]">Ready</span>
    <div className="flex-1" />
    <div className="w-[74px] h-full bg-[#a9a9a9] flex items-center justify-center">
      <svg width="26" height="28" viewBox="0 0 26 28"><path d="M0 1h26v26H0z" fill="#fff" /><path d="M0 9.500h26M0 18h26M8.500 0v28M17.500 0v28" stroke="#a9a9a9" strokeWidth="1.500" /></svg>
    </div>
    <svg width="28" height="28" viewBox="0 0 28 28" fill="none" className="ml-[21px]"><rect x="1" y="1" width="26" height="26" stroke="#666" strokeWidth="2" /><rect x="7" y="5" width="14" height="18" stroke="#666" strokeWidth="2" /><path d="M10 10h8M10 14h8M10 18h8" stroke="#666" strokeWidth="2" /></svg>
    <svg width="28" height="28" viewBox="0 0 28 28" fill="none" className="ml-[43px]"><rect x="1" y="1" width="26" height="26" stroke="#666" strokeWidth="2" /><path d="M1 17h14V1M9 1v16" stroke="#666" strokeWidth="2" /><path d="M15 17h12" stroke="#666" strokeWidth="2" /></svg>
    <div className="w-[16px] h-[4px] bg-[#666] ml-[38px]" />
    <div className="w-[196px] h-[8px] rounded-full bg-[#9b9b9b] ml-[16px] relative">
      <div className="absolute left-[101px] -top-[13px] w-[22px] h-[34px] rounded-full bg-white border border-[#bdbdbd]" />
    </div>
    <svg width="16" height="16" viewBox="0 0 16 16" className="ml-[16px]"><path d="M8 0v16M0 8h16" stroke="#666" strokeWidth="3.500" /></svg>
    <span className="ml-[34px] mr-[48px] text-[24.500px]">145%</span>
  </div>
);

export default function App() {
  return (
    <div className="w-[2560px] h-[1600px] overflow-hidden flex flex-col bg-white font-['Inter','Liberation_Sans',Arial,sans-serif]">
      <TitleBar />
      <Ribbon />
      <UpdateBar />
      <FormulaBar />
      <ColHeader />
      <Sheet />
      <TabBar />
      <StatusBar />
    </div>
  );
}
